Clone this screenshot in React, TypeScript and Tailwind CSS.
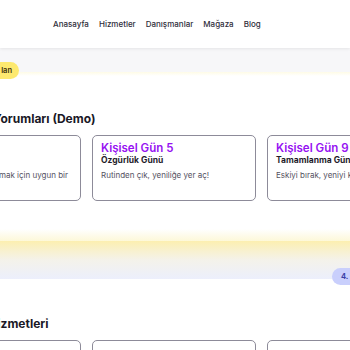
import React from "react";

const font = { fontFamily: "Inter, 'Noto Sans', sans-serif" };

function Card({
  title,
  sub,
  body,
  right,
}: {
  title?: string;
  sub?: string;
  body?: string;
  right?: boolean;
}) {
  return (
    <div className="w-[164px] h-[66px] shrink-0 rounded-[5px] border border-[#8d8b99] bg-white px-[8px] pt-[5px]">
      {title && <div className="text-[11.5px] font-semibold leading-[14px] text-[#9612f2] whitespace-nowrap">{title}</div>}
      {sub && <div className="text-[8.5px] font-bold leading-[11px] text-[#1f1d2b] whitespace-nowrap">{sub}</div>}
      {body && (
        <div
          className={
            right
              ? "mt-[3px] text-[8px] leading-[12px] text-[#55525f] whitespace-nowrap text-right pr-[4px]"
              : "mt-[3px] text-[8px] leading-[12px] text-[#55525f] whitespace-nowrap"
          }
        >
          {body}
        </div>
      )}
    </div>
  );
}

export default function App() {
  return (
    <div className="w-[350px] h-[350px] overflow-hidden bg-white relative" style={font}>
      <header className="h-[48px] bg-white flex items-center pl-[53px] gap-[10px] text-[8px] font-medium text-[#2f2d3a] shadow-[0_1px_3px_rgba(0,0,0,0.08)] relative z-10">
        <span>Anasayfa</span>
        <span>Hizmetler</span>
        <span>Danışmanlar</span>
        <span>Mağaza</span>
        <span>Blog</span>
      </header>
      <div className="h-[24px] bg-[#f7f7f9] relative">
        <div className="absolute left-[-20px] top-[14px] h-[17px] w-[39px] rounded-full bg-[#fde96f] flex items-center justify-end pr-[7px] text-[7.5px] font-semibold text-[#3b2f0a] z-10">
          lan
        </div>
      </div>
      <div className="h-[4px] bg-gradient-to-b from-[#fefbe6] to-white" />
      <div className="pt-[35px] -ml-[7px] text-[12px] font-bold text-[#1a1826] leading-[16px] whitespace-nowrap">
        Yorumları (Demo)
      </div>
      <div className="mt-[8px] -ml-[83px] flex gap-[11px]">
        <Card title="Kişisel Gün 1" sub="Başlangıç Günü" body="Yeni bir işe başlamak için uygun bir" right />
        <Card title="Kişisel Gün 5" sub="Özgürlük Günü" body="Rutinden çık, yeniliğe yer aç!" />
        <Card title="Kişisel Gün 9" sub="Tamamlanma Günü" body="Eskiyi bırak, yeniyi kucakla" />
      </div>
      <div className="mt-[28px] h-[12px] bg-gradient-to-b from-white to-[#fdf8d8]" />
      <div className="h-[38px] bg-gradient-to-b from-[#fcefb0] via-[#f4f2ea] to-[#eceffc] relative">
        <div className="absolute left-[332px] top-[27px] h-[17px] w-[40px] rounded-full bg-[#c9cffc] flex items-center pl-[9px] text-[7.5px] font-bold text-[#3a3fa8]">
          4.
        </div>
      </div>
      <div className="pt-[37px] -ml-[73px] text-[12px] font-bold text-[#1a1826] leading-[16px] whitespace-nowrap">
        Danışman Hizmetleri
      </div>
      <div className="mt-[8px] -ml-[83px] flex gap-[11px]">
        <Card />
        <Card />
        <Card />
      </div>
    </div>
  );
}
